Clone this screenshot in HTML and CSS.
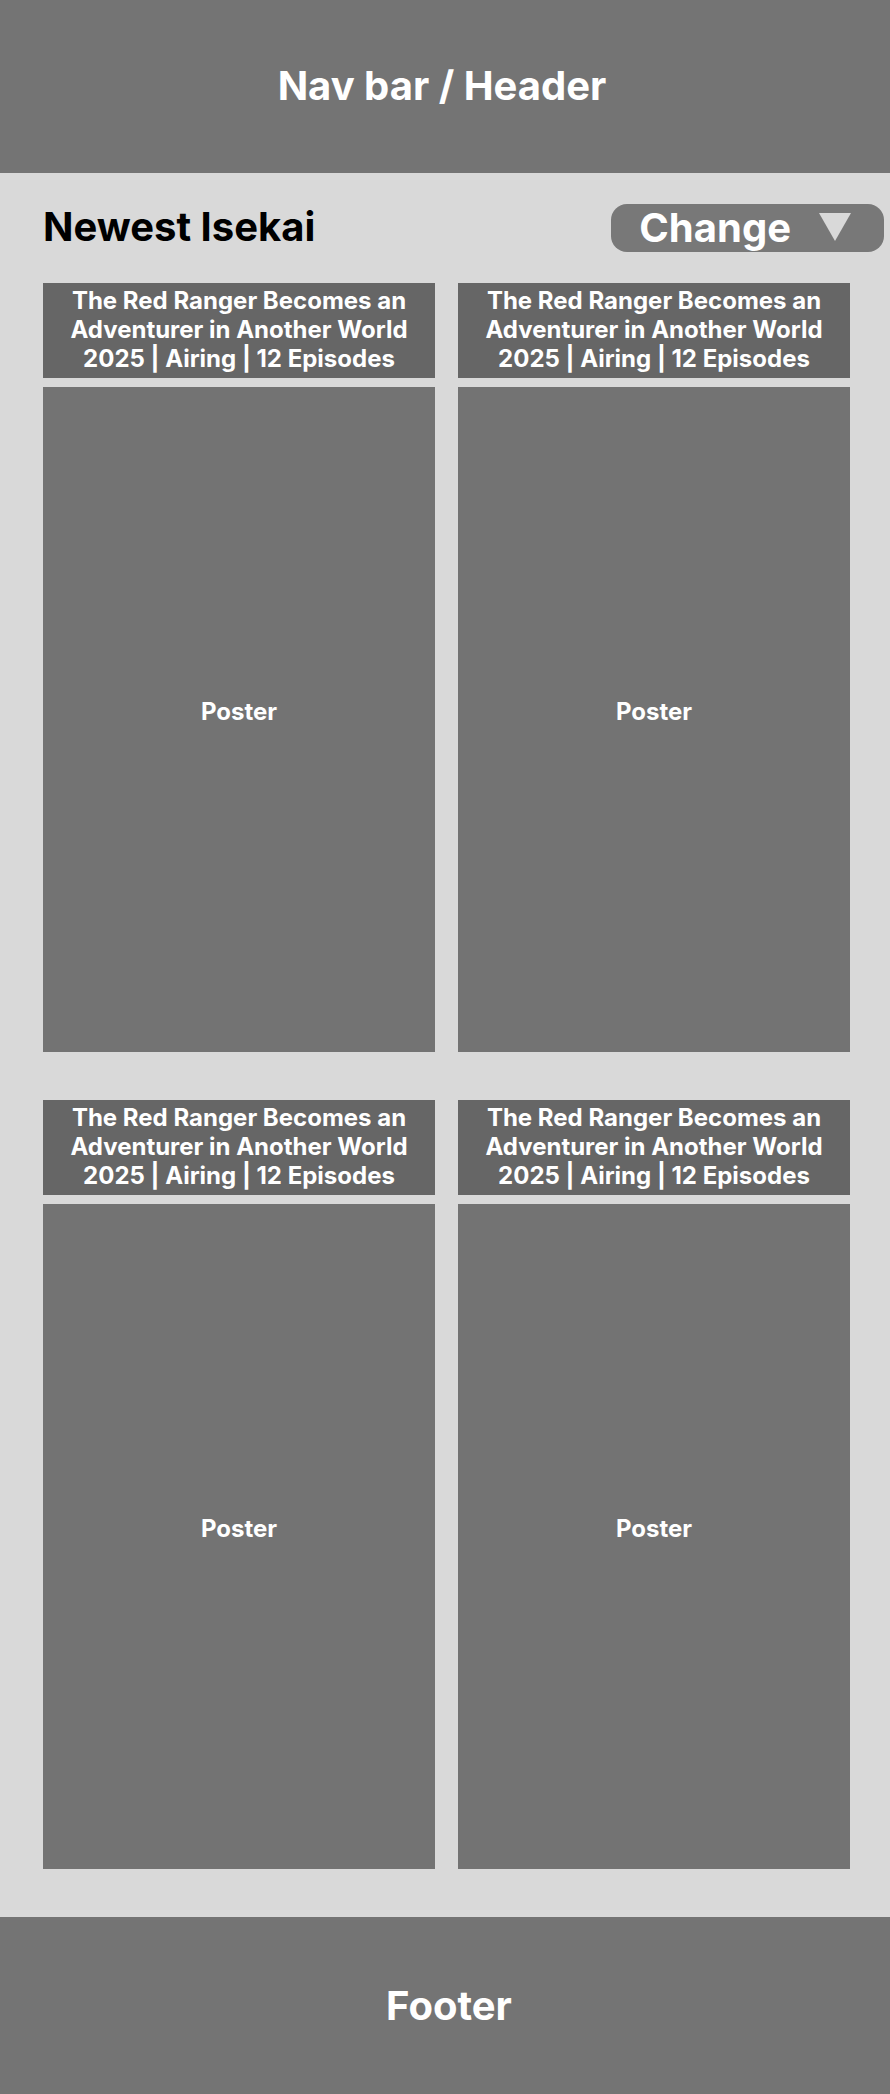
FILE: index.html
```html
<!DOCTYPE html>
<html lang="en">
<head>
  <meta charset="utf-8">
  <meta name="viewport" content="width=device-width, initial-scale=1">
  <title>Newest Isekai</title>
  <link rel="stylesheet" href="styles.css">
</head>
<body>
  <header class="site-header">Nav bar / Header</header>
  <main class="content">
    <div class="toolbar">
      <h1 class="heading">Newest Isekai</h1>
      <button class="change" type="button">
        Change
        <svg class="arrow" viewBox="0 0 32 30" width="32" height="30" aria-hidden="true"><path d="M0 0H32L16 28Z" fill="#d9d9d9"/></svg>
      </button>
    </div>
    <div class="grid">
      <article class="card">
        <h2 class="card-title">The Red Ranger Becomes an Adventurer in Another World<br>2025 | Airing | 12 Episodes</h2>
        <div class="poster">Poster</div>
      </article>
      <article class="card">
        <h2 class="card-title">The Red Ranger Becomes an Adventurer in Another World<br>2025 | Airing | 12 Episodes</h2>
        <div class="poster">Poster</div>
      </article>
      <article class="card">
        <h2 class="card-title">The Red Ranger Becomes an Adventurer in Another World<br>2025 | Airing | 12 Episodes</h2>
        <div class="poster">Poster</div>
      </article>
      <article class="card">
        <h2 class="card-title">The Red Ranger Becomes an Adventurer in Another World<br>2025 | Airing | 12 Episodes</h2>
        <div class="poster">Poster</div>
      </article>
    </div>
  </main>
  <footer class="site-footer">Footer</footer>
</body>
</html>
```
FILE: styles.css
```css
* {
  box-sizing: border-box;
}

body {
  margin: 0;
  background: #d9d9d9;
  color: #fff;
  font-family: Inter, sans-serif;
  font-weight: 700;
  font-size: 24px;
  line-height: 29px;
}

.site-header,
.site-footer {
  background: #747474;
  font-size: 40px;
  line-height: 48px;
  text-align: center;
}

.site-header {
  padding: 62px 6px 63px 0;
}

.site-footer {
  padding: 65px 0 64px 8px;
}

.content {
  padding: 31px 40px 48px 43px;
}

.toolbar {
  display: flex;
  align-items: flex-start;
  justify-content: space-between;
  margin: 0 -34px 31px 0;
}

.heading {
  margin: 0;
  color: #000;
  font-size: 40px;
  line-height: 46px;
}

.change {
  display: flex;
  align-items: center;
  gap: 28px;
  padding: 0 33px 0 28px;
  border: 0;
  border-radius: 16px;
  background: #787878;
  color: #fff;
  font: inherit;
  font-size: 40px;
  line-height: 48px;
}

.grid {
  display: grid;
  grid-template-columns: 1fr 1fr;
  gap: 48px 23px;
}

.card {
  display: grid;
  gap: 9px;
}

.card-title {
  margin: 0;
  padding: 3px 24px 5px;
  background: #666;
  font-size: 24px;
  line-height: 29px;
  text-align: center;
}

.poster {
  display: grid;
  place-items: center;
  min-height: 665px;
  padding-bottom: 16px;
  background: #737373;
}
```
